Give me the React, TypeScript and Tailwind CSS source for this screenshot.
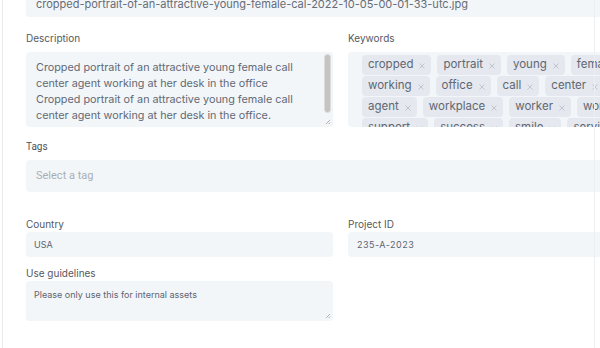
import React from "react";

const rows = [
  ["cropped", "portrait", "young", "female"],
  ["working", "office", "call", "center", "woman"],
  ["agent", "workplace", "worker", "woman"],
  ["support", "success", "smile", "service"],
];

function Chip({ label }: { label: string }) {
  return (
    <span className="flex h-[20px] shrink-0 items-center gap-[6px] rounded-[4px] bg-[#e5e8ee] px-[6px] text-[11.5px] text-[#606773]">
      {label}
      <svg width="6" height="6" viewBox="0 0 6 6" className="mt-[1px]">
        <path d="M0.5 0.5 L5.5 5.5 M5.5 0.5 L0.5 5.5" stroke="#bcc1c8" strokeWidth="0.9" />
      </svg>
    </span>
  );
}

export default function App() {
  return (
    <div
      className="relative h-[348px] w-[600px] overflow-hidden bg-white"
      style={{ fontFamily: "Inter, 'Noto Sans', sans-serif" }}
    >
      <div className="absolute bottom-0 left-[2px] top-0 w-px bg-[#e9ebee]" />
      <div className="absolute bottom-0 left-[594px] top-0 w-px bg-[#eceef1]" />
      <div className="-mt-[10px] w-[640px] pl-[26px]">
        <div className="flex h-[27px] items-center rounded-[4px] bg-[#f3f6f9] pl-[10px] pt-[2px] text-[11px] text-[#666c77]">
          cropped-portrait-of-an-attractive-young-female-cal-2022-10-05-00-01-33-utc.jpg
        </div>
        <div className="mt-[14px] grid grid-cols-[307px_307px] gap-x-[15px]">
          <div>
            <div className="mb-[7px] h-[14px] text-[10px] leading-[14px] text-[#55595f]">Description</div>
            <div className="relative h-[75px] rounded-[4px] bg-[#f3f6f9] pl-[10px] pr-[30px] pt-[8px] text-[10.8px] leading-[16px] text-[#626975]">
              Cropped portrait of an attractive young female call center agent working at her desk in the office
              Cropped portrait of an attractive young female call center agent working at her desk in the office.
              <div className="absolute right-[2px] top-[2px] h-[59px] w-[7px] rounded-[4px] border border-[#dcdcdc] bg-[#c4c4c4]" />
              <svg className="absolute bottom-[2px] right-[2px]" width="6" height="6" viewBox="0 0 6 6">
                <path d="M1 5 L5 1 M3.5 5 L5 3.5" stroke="#9ea3a8" strokeWidth="0.8" />
              </svg>
            </div>
          </div>
          <div>
            <div className="mb-[7px] h-[14px] text-[10px] leading-[14px] text-[#55595f]">Keywords</div>
            <div className="flex h-[75px] flex-col gap-[1px] overflow-hidden rounded-[4px] bg-[#f3f6f9] pl-[14px] pt-[3px]">
              {rows.map((r, i) => (
                <div key={i} className="flex gap-[6px]">
                  {r.map((k) => (
                    <Chip key={k} label={k} />
                  ))}
                </div>
              ))}
            </div>
          </div>
        </div>
        <div className="mb-[6px] mt-[13px] h-[14px] text-[10px] leading-[14px] text-[#4f5358]" style={{ fontFamily: "Roboto, sans-serif" }}>
          Tags
        </div>
        <div
          className="flex h-[32px] items-center rounded-[4px] bg-[#f3f6f9] pl-[10px] text-[11px] text-[#a9aeb5]"
          style={{ fontFamily: "Roboto, sans-serif" }}
        >
          Select a tag
        </div>
        <div className="mt-[25px] grid grid-cols-[307px_307px] gap-x-[15px]">
          <div>
            <div className="mb-[1px] h-[14px] text-[10px] leading-[14px] text-[#55595f]">Country</div>
            <div className="flex h-[25px] items-center rounded-[4px] bg-[#f3f6f9] pl-[8px] text-[9px] text-[#5d6470]">USA</div>
            <div className="mb-[1px] mt-[9px] h-[14px] text-[10px] leading-[14px] text-[#55595f]">Use guidelines</div>
            <div className="relative h-[40px] rounded-[4px] bg-[#f3f6f9] pl-[8px] pt-[7px] text-[9px] leading-[13px] text-[#5d6470]">
              Please only use this for internal assets
              <svg className="absolute bottom-[2px] right-[2px]" width="6" height="6" viewBox="0 0 6 6">
                <path d="M1 5 L5 1 M3.5 5 L5 3.5" stroke="#9ea3a8" strokeWidth="0.8" />
              </svg>
            </div>
          </div>
          <div>
            <div className="mb-[1px] h-[14px] text-[10px] leading-[14px] text-[#55595f]">Project ID</div>
            <div className="flex h-[25px] items-center rounded-[4px] bg-[#f3f6f9] pl-[9px] text-[9px] tracking-[0.5px] text-[#5d6470]">
              235-A-2023
            </div>
          </div>
        </div>
      </div>
    </div>
  );
}
